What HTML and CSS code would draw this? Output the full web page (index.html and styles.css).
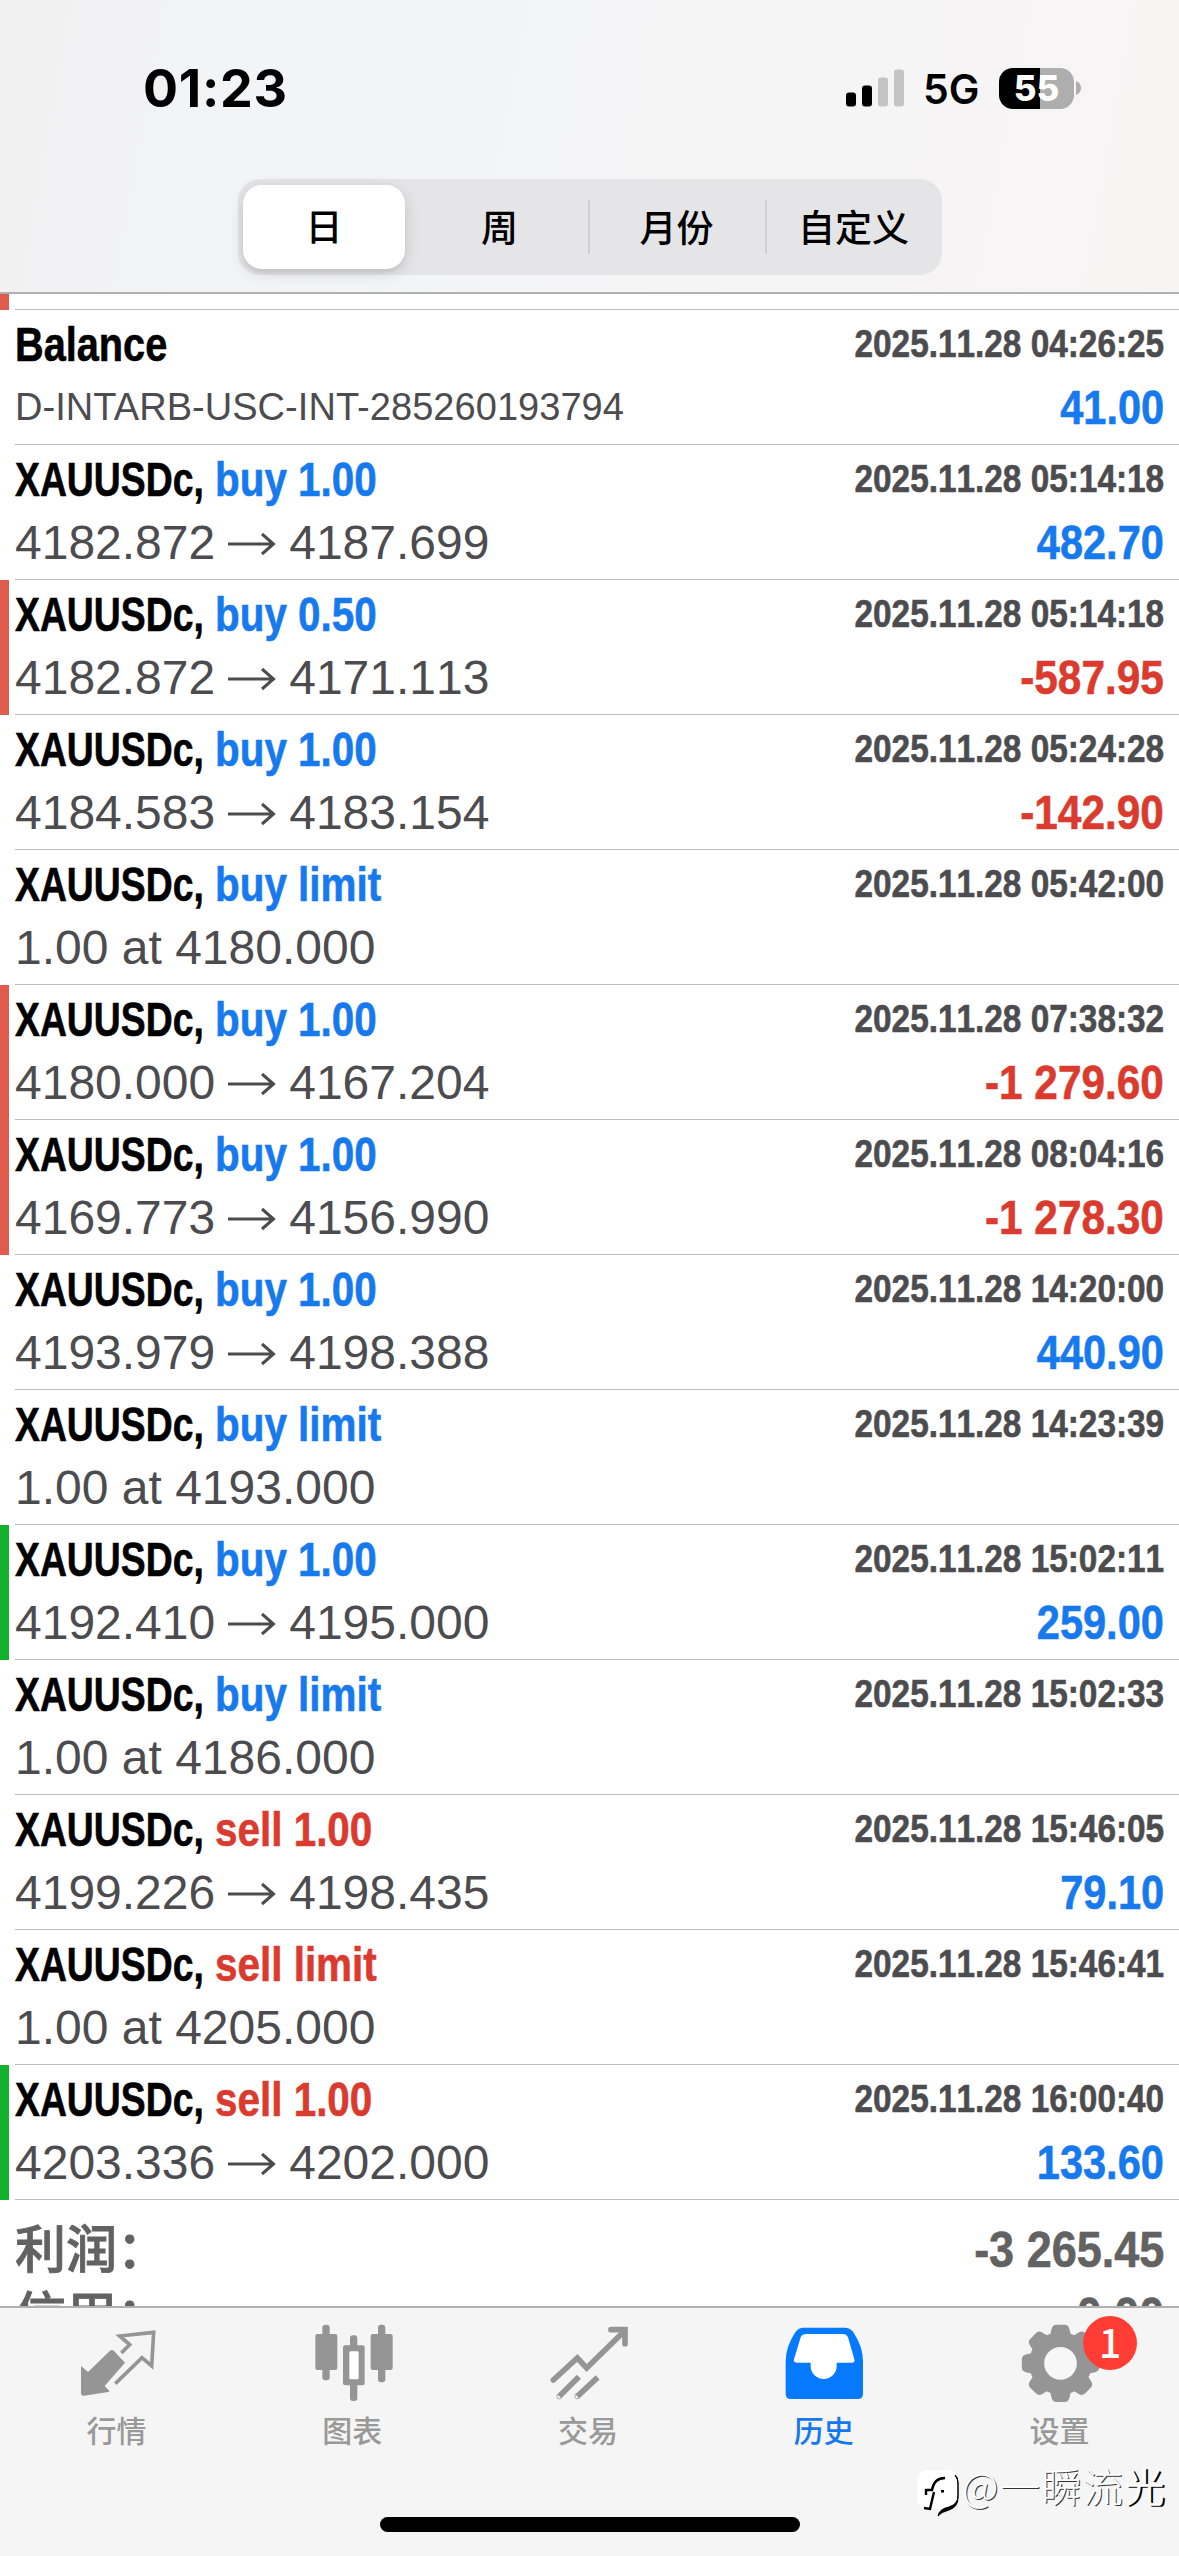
FILE: index.html
```html
<!DOCTYPE html>
<html lang="zh-CN">
<head>
<meta charset="utf-8">
<title>历史</title>
<link rel="stylesheet" href="styles.css">
</head>
<body>
<div class="screen">
  <header class="header">
    <div class="status">
      <span class="time">01:23</span>
      <div class="indicators">
        <svg class="signal" viewBox="0 0 58 38"><rect x="0" y="23.5" width="10" height="14" rx="3"/><rect x="16" y="16.5" width="10" height="21" rx="3"/><g fill="#c4c4c5"><rect x="32" y="8.5" width="10" height="29" rx="3"/><rect x="48" y="0.5" width="10" height="37" rx="3"/></g></svg>
        <span class="network">5G</span>
        <div class="battery"><span>55</span></div>
        <svg class="nub" viewBox="0 0 5 14"><path d="M0 0Q5 2 5 7Q5 12 0 14Z" fill="#aeaeae"/></svg>
      </div>
    </div>
    <nav class="segments">
      <span class="segment selected">日</span>
      <span class="segment">周</span>
      <span class="segment divided">月份</span>
      <span class="segment divided">自定义</span>
    </nav>
  </header>

  <main class="history" id="history">
    <section class="row loss partial"><div class="body"></div></section>
  </main>

  <nav class="tabs">
    <a class="tab">
      <svg viewBox="48 24 252 252"><path d="M63 168L84 186L150 122Q156 117 162 123L195 158L134 228L149 244Q148 246 140 247L72 257Q63 258 63 248Z" fill="#959595"/><path d="M184 129L209 104L179 78L281 67L275 168L246 143L166 221" fill="none" stroke="#959595" stroke-width="11"/></svg>
      <span>行情</span>
    </a>
    <a class="tab">
      <svg viewBox="755 24 252 252" fill="#959595"><rect x="786" y="44" width="22" height="167" rx="9"/><rect x="765" y="72" width="66" height="108" rx="6"/><rect x="953" y="44" width="22" height="173" rx="9"/><rect x="931" y="72" width="66" height="108" rx="6"/><rect x="869" y="76" width="22" height="197" rx="9"/><rect x="848" y="106" width="65" height="120" rx="6"/><rect x="867" y="124" width="28" height="84" rx="4" fill="#fff"/></svg>
      <span>图表</span>
    </a>
    <a class="tab">
      <svg viewBox="52 54 252 252" fill="none" stroke="#959595" stroke-width="17" stroke-linecap="round"><path d="M71 240L143 174L171 204L285 92" stroke-linejoin="miter"/><path d="M244 89H286V131"/><path d="M89 289L148 230M143 289L204 232" stroke-linecap="butt"/><circle cx="89" cy="289" r="1" stroke-width="15"/><circle cx="143" cy="289" r="1" stroke-width="15"/></svg>
      <span>交易</span>
    </a>
    <a class="tab active">
      <svg viewBox="760 54 252 252"><path d="M822 83H945Q963 83 971 97Q1000 140 1000 185V281Q1000 297 984 297H784Q768 297 768 281V185Q768 140 797 97Q805 83 822 83Z" fill="#067aff"/><path d="M830 102H939Q950 102 955 112L974 178Q977 188 967 188H921V199A39 38 0 0 1 843 199V188H801Q790 188 793 178L813 112Q818 102 830 102Z" fill="#fff"/></svg>
      <span>历史</span>
    </a>
    <a class="tab">
      <svg viewBox="357 54 252 252"><defs><path id="tooth" d="M445 115Q452 105 455 86Q458 74 469 74H494Q505 74 508 86Q511 105 518 115Z"/></defs><g fill="#959595"><circle cx="481.500" cy="190" r="94"/><use href="#tooth"/><use href="#tooth" transform="rotate(45 481.500 190)"/><use href="#tooth" transform="rotate(90 481.500 190)"/><use href="#tooth" transform="rotate(135 481.500 190)"/><use href="#tooth" transform="rotate(180 481.500 190)"/><use href="#tooth" transform="rotate(225 481.500 190)"/><use href="#tooth" transform="rotate(270 481.500 190)"/><use href="#tooth" transform="rotate(315 481.500 190)"/></g><circle cx="481.500" cy="190" r="49" fill="#f7f7f7"/></svg>
      <span>设置</span>
      <b class="badge">1</b>
    </a>
  </nav>
  <div class="home"></div>
  <div class="watermark">
    <svg viewBox="0 0 42 48"><path d="M12 0H30Q41 0 41 12V27Q41 37 31 39L22 46V39H12Q0 39 0 27V12Q0 0 12 0Z" fill="#fff"/><path d="M38 5Q41 9 41 14V26Q41 34 32 37Q22 39 21 46Q24 42 32 40Q41 37 41 28V12Q41 7 38 5Z" fill="#000" stroke="#000" stroke-width="1"/><path d="M9 25V20H15Q17 8 28 8M17 22L13 39L7 38" fill="none" stroke="#000" stroke-width="2.400"/><rect x="24" y="20" width="3" height="2.500"/></svg>
    <span>@一瞬流<b>光</b></span>
  </div>
</div>
<script src="history.js"></script>
</body>
</html>
```
FILE: styles.css
```css
* { box-sizing: border-box; }
body { margin: 0; background: #fff; font-family: "Liberation Sans", "Noto Sans CJK SC", sans-serif; color: #000; }
.screen { position: relative; width: 1179px; height: 2556px; overflow: hidden; display: flex; flex-direction: column; }

.header { height: 294px; flex: none; border-bottom: 2px solid #b0b0b2; background: linear-gradient(100deg, #f1f0f1 0, #f3f4f6 20%, #f5f5f6 60%, #f7f4f4 100%); }
.status { height: 179px; padding: 0 98px 0 143px; display: flex; justify-content: space-between; font-family: Inter, sans-serif; }
.time { font-size: 52px; font-weight: 700; line-height: 177px; letter-spacing: .7px; }
.indicators { display: flex; height: 176px; align-items: center; }
.signal { width: 58px; height: 38px; margin-right: 19px; }
.network { font-size: 41px; font-weight: 600; width: 58px; margin: 2px 18px 0 0; white-space: nowrap; }
.battery { width: 75px; height: 41px; border-radius: 14px; background: linear-gradient(90deg, #000 41px, #aeaeae 41px); color: #fff; font-size: 35px; font-weight: 800; display: flex; align-items: center; justify-content: center; }
.nub { width: 5px; height: 14px; margin-left: 2px; }

.segments { width: 704px; height: 96px; margin-left: 238px; border-radius: 22px; background: #e5e5e7; display: grid; grid-template-columns: 173px 177px 177px 177px; align-items: center; }
.segment { text-align: center; font: 500 37px/52px "Noto Sans CJK SC", sans-serif; height: 54px; padding-right: 2px; border-left: 2px solid transparent; }
.segment.divided { border-left-color: #cfcfd2; }
.segment.selected { height: 84px; line-height: 81px; width: 162px; margin-left: 5px; padding: 0; border: 0; border-radius: 19px; background: #fff; box-shadow: 0 4px 16px rgba(0,0,0,.14), 0 4px 2px rgba(0,0,0,.04); }

.history { flex: 1; min-height: 0; overflow: hidden; font-kerning: none; }
.row { height: 135px; padding-left: 6px; border-left: 9px solid transparent; }
.row.loss { border-left-color: #e05d4e; }
.row.gain { border-left-color: #13b12e; }
.row.partial { height: 16px; }
.body { height: 100%; padding: 1px 15px 0 0; border-bottom: 1px solid #bcbcbe; }
.partial .body { padding: 0; }
.line { display: flex; justify-content: space-between; white-space: nowrap; }
.head { height: 65px; line-height: 66px; font-weight: 700; }
.detail { height: 63px; line-height: 63px; color: #4c4c4f; font-size: 48px; }
.title { display: flex; font-size: 49px; }
.title, .date, .value, .sum { -webkit-text-stroke: .6px currentColor; }
.symbol { width: 200px; transform: scaleX(.762); transform-origin: left; }
.name { transform: scaleX(.81); transform-origin: left; }
.action { transform: scaleX(.825); transform-origin: left; }
.buy, .plus { color: #1779ee; }
.sell, .minus { color: #da3b2e; }
.date { font-size: 39px; color: #4c4c4f; transform: scaleX(.855); transform-origin: right; }
.value { font-weight: 700; transform: scaleX(.865); transform-origin: right; }
.value.minus { transform: scaleX(.882); }
.prices { display: flex; align-items: center; }
.arrow { width: 48px; height: 24px; margin: 2px 13px 0 13px; fill: none; stroke: #4c4c4f; stroke-width: 3; }
.note { font-size: 38px; font-kerning: normal; letter-spacing: .05px; }

.totals { padding: 17px 15px 0; color: #626262; font-size: 50px; font-weight: 700; }
.totals .line { height: 65.500px; line-height: 66px; }
.totals .label { margin-top: -4px; font-family: "Noto Sans CJK SC", sans-serif; font-weight: 500; font-size: 51px; -webkit-text-stroke: .8px currentColor; }
.totals .sum { transform: scaleX(.9); transform-origin: right; }

.tabs { height: 250px; flex: none; padding-top: 10px; border-top: 2px solid #b0b0b2; background: #f5f5f5; display: grid; grid-template-columns: repeat(5, 1fr); align-items: start; }
.tab { position: relative; display: flex; flex-direction: column; align-items: center; gap: 9px; color: #999; font: 500 30px/36px "Noto Sans CJK SC", sans-serif; }
.tab svg { width: 84px; height: 84px; }
.tab span { margin-right: 3px; }
.tab.active { color: #1678ee; }
.badge { position: absolute; left: 140px; top: -2px; width: 54px; height: 54px; border-radius: 50%; background: #ff3d34; color: #fff; font: 500 39px/50px "Noto Sans CJK SC", sans-serif; text-align: center; }
.home { position: absolute; left: 380px; top: 2517px; width: 420px; height: 15px; border-radius: 8px; background: #000; }
.watermark { position: absolute; left: 917px; top: 2470px; display: flex; gap: 3px; color: #fff; font: 300 40px/48px "Noto Sans CJK SC", sans-serif; letter-spacing: 1.5px; white-space: nowrap; text-shadow: 1px 1px 0 #333; }
.watermark svg { width: 42px; height: 48px; }
.watermark span { margin-top: -9px; }
.watermark b { font-weight: 400; text-shadow: 2px 1px 0 #000; }
```
FILE: history.js
```js
const deals = [
  ["buy 1.00", "05:14:18", "4182.872", "4187.699", "482.70", ""],
  ["buy 0.50", "05:14:18", "4182.872", "4171.113", "-587.95", "loss"],
  ["buy 1.00", "05:24:28", "4184.583", "4183.154", "-142.90", ""],
  ["buy limit", "05:42:00", "1.00 at 4180.000"],
  ["buy 1.00", "07:38:32", "4180.000", "4167.204", "-1 279.60", "loss"],
  ["buy 1.00", "08:04:16", "4169.773", "4156.990", "-1 278.30", "loss"],
  ["buy 1.00", "14:20:00", "4193.979", "4198.388", "440.90", ""],
  ["buy limit", "14:23:39", "1.00 at 4193.000"],
  ["buy 1.00", "15:02:11", "4192.410", "4195.000", "259.00", "gain"],
  ["buy limit", "15:02:33", "1.00 at 4186.000"],
  ["sell 1.00", "15:46:05", "4199.226", "4198.435", "79.10", ""],
  ["sell limit", "15:46:41", "1.00 at 4205.000"],
  ["sell 1.00", "16:00:40", "4203.336", "4202.000", "133.60", "gain"]
];

const arrow = '<svg class="arrow" viewBox="0 0 48 24"><path d="M0 12H45M34 2L45.500 12L34 22"/></svg>';

function row(title, time, detail, value, mark) {
  const sign = value && value[0] === "-" ? "minus" : "plus";
  return `<section class="row ${mark || ""}"><div class="body">
    <div class="line head"><div class="title">${title}</div><span class="date">2025.11.28 ${time}</span></div>
    <div class="line detail">${detail}${value ? `<span class="value ${sign}">${value}</span>` : ""}</div>
  </div></section>`;
}

let html = row('<span class="name">Balance</span>', "04:26:25", '<span class="note">D-INTARB-USC-INT-285260193794</span>', "41.00");
for (const [action, time, open, close, value, mark] of deals) {
  const title = `<span class="symbol">XAUUSDc,</span><span class="action ${action.split(" ")[0]}">${action}</span>`;
  const detail = `<div class="prices">${open}${close ? arrow + close : ""}</div>`;
  html += row(title, time, detail, value, mark);
}
html += `<section class="totals">
  <div class="line"><span class="label">利润：</span><span class="sum">-3 265.45</span></div>
  <div class="line"><span class="label">信用：</span><span class="sum">0.00</span></div>
</section>`;
document.getElementById("history").insertAdjacentHTML("beforeend", html);
```
